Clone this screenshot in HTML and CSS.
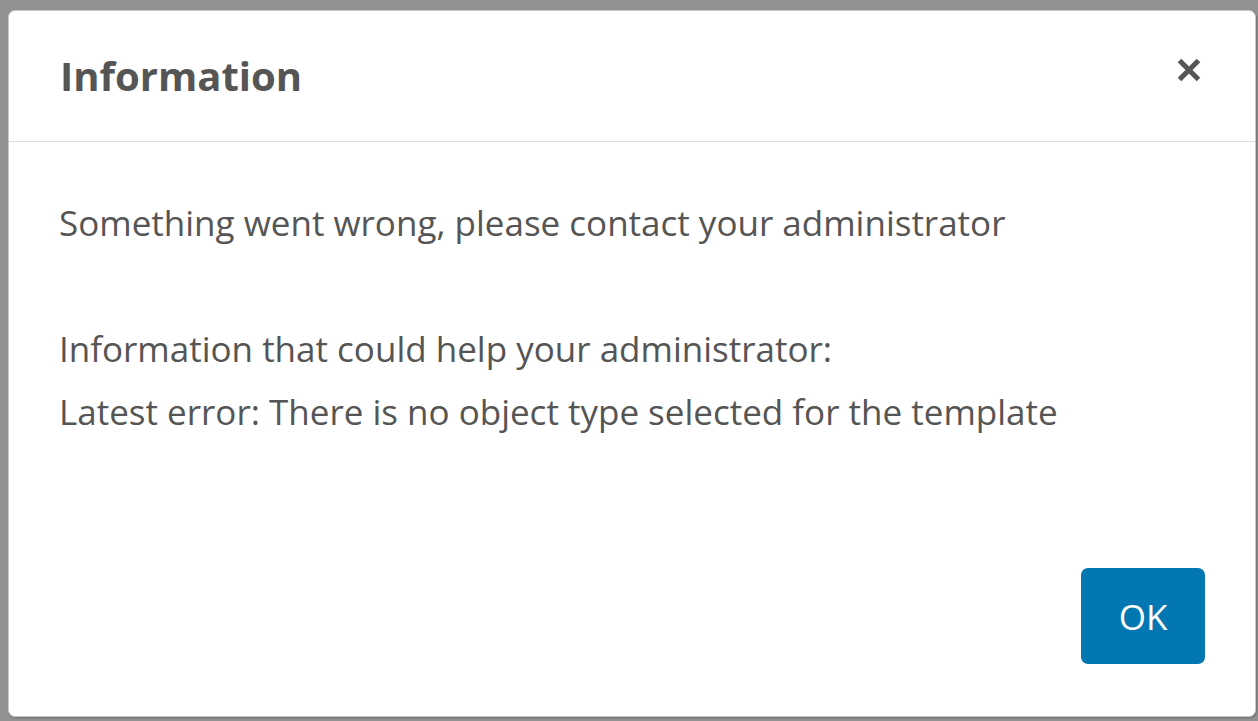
FILE: index.html
```html
<!DOCTYPE html>
<html lang="en">
<head>
<meta charset="utf-8">
<title>Information</title>
<link rel="stylesheet" href="styles.css">
</head>
<body>
<div class="backdrop">
  <div class="modal" role="dialog" aria-labelledby="modal-title">
    <div class="modal-header">
      <h2 class="modal-title" id="modal-title">Information</h2>
      <button class="close-btn" type="button" aria-label="Close">
        <svg width="26" height="26" viewBox="0 0 26 26" aria-hidden="true">
          <path d="M3.5 3.5 L22.5 22.5 M22.5 3.5 L3.5 22.5" stroke="#555555" stroke-width="5" fill="none"/>
        </svg>
      </button>
    </div>
    <div class="modal-body">
      <p class="line">Something went wrong, please contact your administrator</p>
      <p class="line blank">&nbsp;</p>
      <p class="line">Information that could help your administrator:</p>
      <p class="line">Latest error: There is no object type selected for the template</p>
    </div>
    <div class="modal-footer">
      <button class="ok-btn" type="button">OK</button>
    </div>
  </div>
</div>
</body>
</html>
```

FILE: styles.css
```css
* { box-sizing: border-box; }

html, body {
  margin: 0;
  padding: 0;
  height: 100%;
}

body {
  background: #929292;
  font-family: "Open Sans", "Liberation Sans", sans-serif;
  color: #555555;
}

.backdrop {
  padding: 10px 2px 4px 8px;
  height: 100%;
}

.modal {
  width: 1248px;
  height: 707px;
  background: #ffffff;
  border: 1px solid #c9c9c9;
  border-radius: 7px;
  box-shadow: 1px 1px 2px rgba(0,0,0,0.25);
  display: flex;
  flex-direction: column;
}

.modal-header {
  height: 131px;
  flex: none;
  border-bottom: 1px solid #dddddd;
  display: flex;
  align-items: center;
  justify-content: space-between;
  padding: 0 50px 0 51px;
}

.modal-title {
  margin: 0;
  font-size: 40px;
  line-height: 40px;
  font-weight: 700;
  color: #555555;
}

.close-btn {
  background: none;
  border: 0;
  padding: 0;
  width: 26px;
  height: 26px;
  margin: 0 3px 12px 0;
  cursor: pointer;
  display: flex;
}

.modal-body {
  flex: 1;
  padding: 49px 50px 0 50px;
}

.line {
  margin: 0;
  font-size: 35px;
  line-height: 63px;
  color: #555555;
}

.modal-footer {
  flex: none;
  display: flex;
  justify-content: flex-end;
  padding: 0 50px 52px 50px;
}

.ok-btn {
  width: 124px;
  height: 96px;
  background: #0377b1;
  color: #ffffff;
  border: 0;
  border-radius: 7px;
  font-family: "Open Sans", "Liberation Sans", sans-serif;
  font-size: 35px;
  cursor: pointer;
}
```
